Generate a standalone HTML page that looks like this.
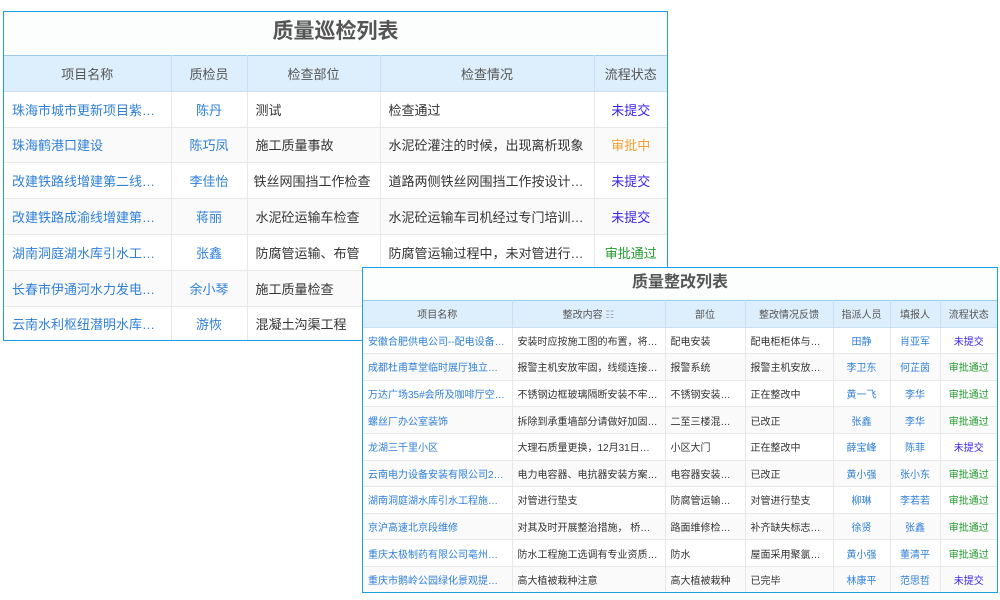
<!DOCTYPE html>
<html><head><meta charset="utf-8"><style>
*{margin:0;padding:0;box-sizing:border-box}
body{width:1000px;height:600px;background:#fff;position:relative;overflow:hidden;font-family:"Liberation Sans","Noto Sans CJK SC",sans-serif;color:#333}
.box{position:absolute;background:#fff;border:1px solid #1a9fe8;overflow:hidden}
.title{text-align:center;font-weight:bold;color:#555;background:#fcfdfd}
table{border-collapse:collapse;table-layout:fixed;width:100%}
td,th{border:1px solid #e8e8e8;white-space:nowrap;overflow:hidden;text-overflow:ellipsis;font-weight:normal;background:#fff}
th{background:#ddeefc;color:#555;border-color:#c9dff2;text-align:center}
tr:nth-child(odd) td{background:#fafafa}
td.l{color:#2f7fd8}
td.c{text-align:center}
td.p{color:#2f7fd8;text-align:center}
.n{color:#3a24e8}.o{color:#f5a032}.g{color:#229a2e}
#t1 td,#t1 th{font-size:13px;height:35.8px;padding:0 8px}
#t1 tr:first-child th{border-top:1px solid #9ccbee}
#t2 td,#t2 th{font-size:10px;height:26.6px;padding:0 5px}
#t2 tr:first-child th{border-top:1px solid #9ccbee}
tr td:first-child,tr th:first-child{border-left:none}
tr td:last-child,tr th:last-child{border-right:none}
</style></head><body>
<div class="box" style="left:3px;top:11px;width:665px;height:330px">
<div class="title" style="height:43px;line-height:40px;font-size:21px">质量巡检列表</div>
<table id="t1"><colgroup><col style="width:167px"><col style="width:76px"><col style="width:133px"><col style="width:214px"><col></colgroup>
<tr><th>项目名称</th><th>质检员</th><th>检查部位</th><th>检查情况</th><th>流程状态</th></tr>
<tr><td class="l">珠海市城市更新项目紫荆园</td><td class="p">陈丹</td><td>测试</td><td>检查通过</td><td class="c n">未提交</td></tr>
<tr><td class="l">珠海鹤港口建设</td><td class="p">陈巧凤</td><td>施工质量事故</td><td>水泥砼灌注的时候，出现离析现象</td><td class="c o">审批中</td></tr>
<tr><td class="l">改建铁路线增建第二线工程</td><td class="p">李佳怡</td><td style="padding:0 6px">铁丝网围挡工作检查</td><td>道路两侧铁丝网围挡工作按设计要求</td><td class="c n">未提交</td></tr>
<tr><td class="l">改建铁路成渝线增建第二线</td><td class="p">蒋丽</td><td>水泥砼运输车检查</td><td>水泥砼运输车司机经过专门培训上岗</td><td class="c n">未提交</td></tr>
<tr><td class="l">湖南洞庭湖水库引水工程施工</td><td class="p">张鑫</td><td>防腐管运输、布管</td><td>防腐管运输过程中，未对管进行垫支</td><td class="c g">审批通过</td></tr>
<tr><td class="l">长春市伊通河水力发电站工程</td><td class="p">余小琴</td><td>施工质量检查</td><td></td><td></td></tr>
<tr><td class="l">云南水利枢纽潜明水库工程</td><td class="p">游恢</td><td>混凝土沟渠工程</td><td></td><td></td></tr>
</table></div>

<div class="box" style="left:362px;top:267px;width:636px;height:326px">
<div class="title" style="height:32px;line-height:30px;font-size:16px">质量整改列表</div>
<table id="t2"><colgroup><col style="width:149px"><col style="width:153px"><col style="width:80px"><col style="width:88px"><col style="width:57px"><col style="width:50px"><col></colgroup>
<tr><th>项目名称</th><th>整改内容 <span style="color:#aab">☷</span></th><th>部位</th><th>整改情况反馈</th><th>指派人员</th><th>填报人</th><th>流程状态</th></tr>
<tr><td class="l">安徽合肥供电公司--配电设备安装</td><td>安装时应按施工图的布置，将柜体</td><td>配电安装</td><td>配电柜柜体与基础</td><td class="p">田静</td><td class="p">肖亚军</td><td class="c n">未提交</td></tr>
<tr><td class="l">成都杜甫草堂临时展厅独立展柜</td><td>报警主机安放牢固，线缆连接可靠</td><td>报警系统</td><td>报警主机安放牢固</td><td class="p">李卫东</td><td class="p">何芷茵</td><td class="c g">审批通过</td></tr>
<tr><td class="l">万达广场35#会所及咖啡厅空调工程</td><td>不锈钢边框玻璃隔断安装不牢固的</td><td>不锈钢安装工程</td><td>正在整改中</td><td class="p">黄一飞</td><td class="p">李华</td><td class="c g">审批通过</td></tr>
<tr><td class="l">螺丝厂办公室装饰</td><td>拆除到承重墙部分请做好加固措施</td><td>二至三楼混凝土</td><td>已改正</td><td class="p">张鑫</td><td class="p">李华</td><td class="c g">审批通过</td></tr>
<tr><td class="l">龙湖三千里小区</td><td>大理石质量更换，12月31日之前完成</td><td>小区大门</td><td>正在整改中</td><td class="p">薛宝峰</td><td class="p">陈菲</td><td class="c n">未提交</td></tr>
<tr><td class="l">云南电力设备安装有限公司2020项目</td><td>电力电容器、电抗器安装方案,需修改</td><td>电容器安装工程</td><td>已改正</td><td class="p">黄小强</td><td class="p">张小东</td><td class="c g">审批通过</td></tr>
<tr><td class="l">湖南洞庭湖水库引水工程施工I标</td><td>对管进行垫支</td><td>防腐管运输布管</td><td>对管进行垫支</td><td class="p">柳琳</td><td class="p">李若若</td><td class="c g">审批通过</td></tr>
<tr><td class="l">京沪高速北京段维修</td><td>对其及时开展整治措施， 桥头跳车</td><td>路面维修检查项</td><td>补齐缺失标志标线</td><td class="p">徐贤</td><td class="p">张鑫</td><td class="c g">审批通过</td></tr>
<tr><td class="l">重庆太极制药有限公司亳州中药厂</td><td>防水工程施工选调有专业资质的队伍</td><td>防水</td><td>屋面采用聚氯乙烯</td><td class="p">黄小强</td><td class="p">董清平</td><td class="c g">审批通过</td></tr>
<tr><td class="l">重庆市鹅岭公园绿化景观提升工程</td><td>高大植被栽种注意</td><td>高大植被栽种</td><td>已完毕</td><td class="p">林康平</td><td class="p">范思哲</td><td class="c n">未提交</td></tr>
</table></div>
</body></html>
